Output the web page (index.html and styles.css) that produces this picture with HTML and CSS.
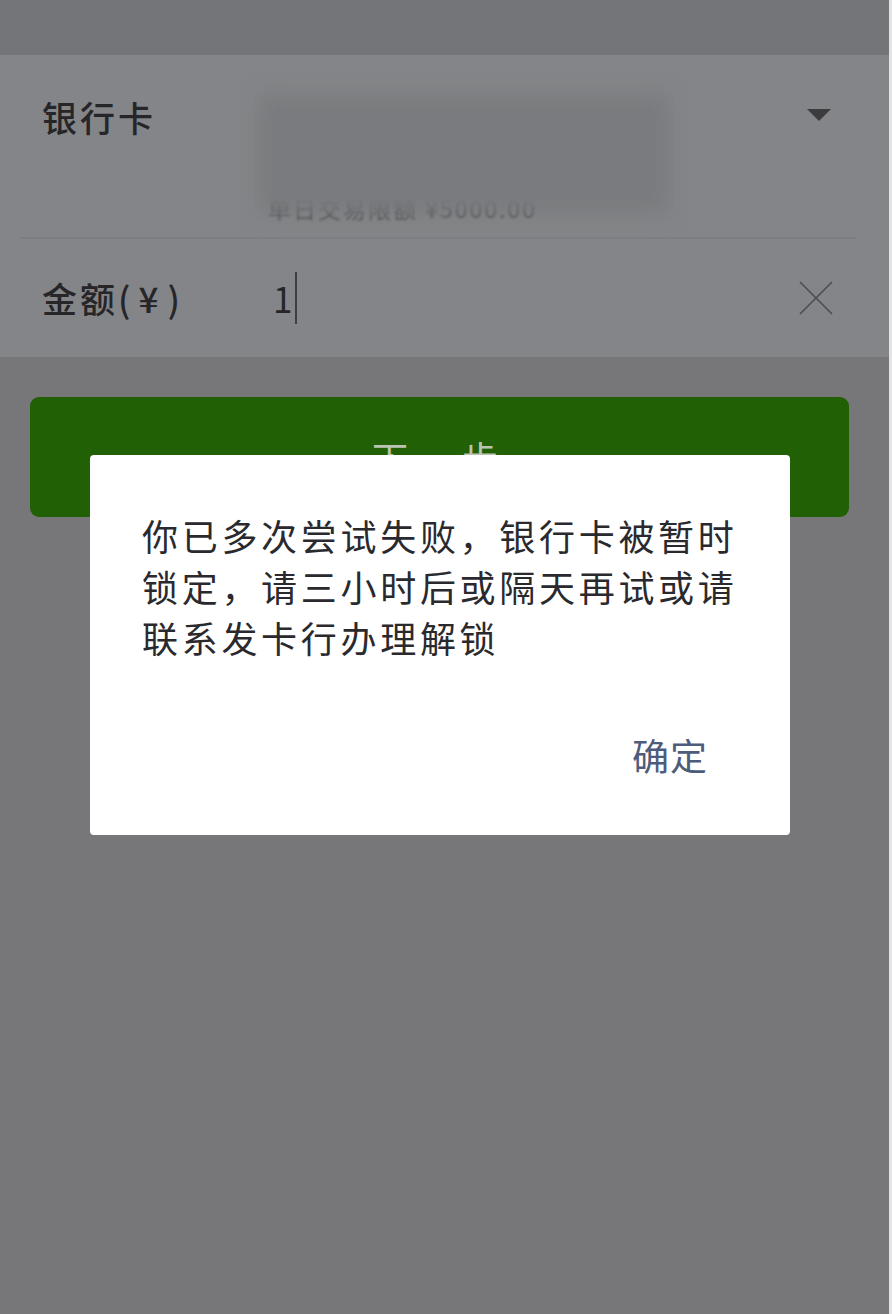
FILE: index.html
```html
<!DOCTYPE html>
<html lang="zh-CN">
<head>
    <meta charset="UTF-8">
    <meta name="viewport" content="width=device-width, initial-scale=1.0">
    <title>零钱提现</title>
    <link rel="stylesheet" href="styles.css">
</head>
<body>

<div class="screen">
    <div class="topbar"></div>

    <div class="panel">
        <div class="row bank-row">
            <span class="label">银行卡</span>
            <div class="card-info">
                <div class="card-mask"></div>
                <p class="limit">单日交易限额 ¥5000.00</p>
            </div>
            <span class="arrow"></span>
        </div>
        <div class="divider"></div>
        <div class="row amount-row">
            <span class="label">金额(<span class="yen">¥</span>)</span>
            <div class="amount-input">
                <span class="amount">1</span>
                <span class="cursor"></span>
            </div>
            <svg class="clear" width="34" height="34" viewBox="0 0 34 34">
                <path d="M1 1 L33 33 M33 1 L1 33" stroke="#4c4c4f" stroke-width="1.6" fill="none"/>
            </svg>
        </div>
    </div>

    <div class="actions">
        <button class="button">下一步</button>
    </div>

    <!-- 弹窗 -->
    <div class="dialog">
        <p class="dialog-text">你已多次尝试失败，银行卡被暂时锁定，请三小时后或隔天再试或请联系发卡行办理解锁</p>
        <div class="dialog-footer">
            <span class="dialog-btn">确定</span>
        </div>
    </div>
</div>

</body>
</html>
```

FILE: styles.css
```css
body {
    margin: 0;
    padding: 0;
    background-color: #77777a;
    font-family: "Noto Sans CJK SC", "Noto Sans", sans-serif;
}
.screen {
    position: relative;
    width: 889px;
    height: 1314px;
    border-right: 3px solid #e4e4e6;
    background-color: #77777a;
    overflow: hidden;
}
.topbar {
    height: 55px;
    background-color: #747578;
}
.panel {
    background-color: #848588;
}
.row {
    display: flex;
    padding: 0 58px 0 42px;
    color: #262628;
}
.label {
    font-size: 35px;
    font-weight: 500;
    line-height: 40px;
    letter-spacing: 3px;
    width: 223px;
    flex-shrink: 0;
}
.yen {
    padding: 0 6px 0 5px;
}
.bank-row {
    height: 182px;
    align-items: flex-start;
}
.bank-row .label {
    padding-top: 42px;
}
.card-info {
    position: relative;
    flex: 1;
    height: 182px;
}
.limit {
    position: absolute;
    left: 3px;
    top: 136px;
    margin: 0;
    font-size: 23px;
    letter-spacing: 2px;
    color: #4d4e51;
    filter: blur(1px);
}
.card-mask {
    position: absolute;
    left: -6px;
    top: 40px;
    width: 410px;
    height: 118px;
    background-color: #7a7b7e;
    filter: blur(10px);
    z-index: 1;
}
.arrow {
    margin-top: 54px;
    width: 0;
    height: 0;
    border-left: 12px solid transparent;
    border-right: 12px solid transparent;
    border-top: 12px solid #3c3c3f;
}
.divider {
    height: 2px;
    margin: 0 32px 0 20px;
    background-color: #7d7e81;
}
.amount-row {
    height: 118px;
    align-items: center;
    padding-right: 54px;
}
.amount-input {
    flex: 1;
    display: flex;
    align-items: center;
    padding-left: 8px;
}
.amount {
    font-size: 35px;
    line-height: 40px;
}
.cursor {
    width: 2px;
    height: 52px;
    margin-left: 3px;
    background-color: #3e3e41;
}
.clear {
    margin-right: 2px;
}
.actions {
    padding: 40px 40px 0 30px;
}
.button {
    display: block;
    width: 100%;
    height: 120px;
    border: none;
    border-radius: 9px;
    background-color: #216004;
    color: #b9c4b2;
    font-family: inherit;
    font-size: 36px;
    letter-spacing: 9px;
}
.dialog {
    position: absolute;
    left: 90px;
    top: 455px;
    width: 700px;
    height: 380px;
    background-color: #fff;
    border-radius: 4px;
    box-sizing: border-box;
    padding: 55px 46px 0 52px;
}
.dialog-text {
    margin: 0;
    font-size: 36px;
    line-height: 51px;
    letter-spacing: 3.7px;
    color: #2a2a2e;
}
.dialog-footer {
    display: flex;
    justify-content: flex-end;
    margin-top: 72px;
    padding-right: 36px;
}
.dialog-btn {
    font-size: 37px;
    line-height: 40px;
    letter-spacing: 1px;
    color: #4e5c7c;
}
```
